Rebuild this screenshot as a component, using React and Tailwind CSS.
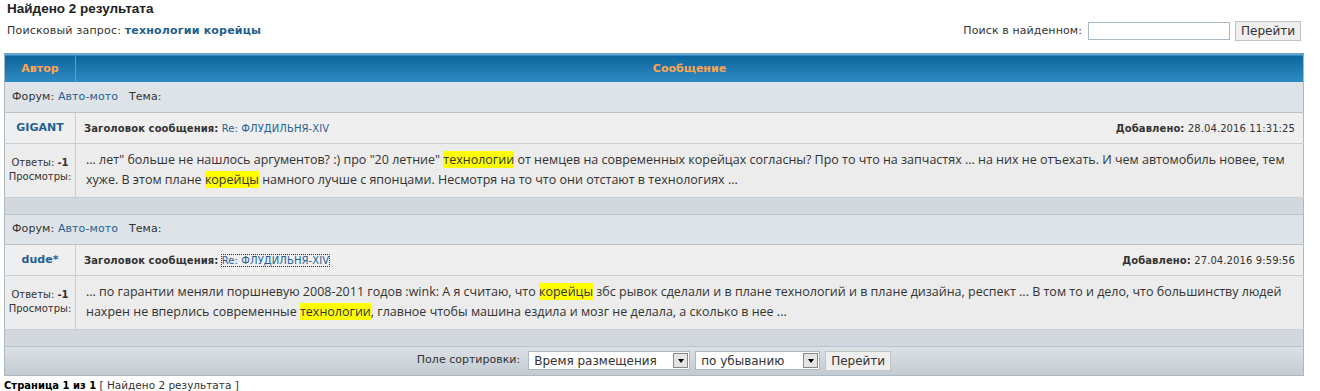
import React from "react";

const verdana = { fontFamily: '"DejaVu Sans", Verdana, sans-serif' };

function Hl({ children }) {
  return <span className="bg-[#ffff00]">{children}</span>;
}

function Select({ label, width }) {
  return (
    <div className={`flex items-center justify-between h-[19px] bg-white border border-[#a9b8c2] pl-[5px] pr-[1px] ${width}`}>
      <span className="text-[12px] text-[#333]">{label}</span>
      <span className="flex items-center justify-center w-[15px] h-[15px] bg-[#e4e4e4] border border-[#888]">
        <span className="w-0 h-0 border-l-[3px] border-r-[3px] border-t-[4px] border-l-transparent border-r-transparent border-t-black"></span>
      </span>
    </div>
  );
}

function Button({ children }) {
  return (
    <button className="h-[20px] px-[5px] bg-[#efefef] border border-[#c3c3c3] text-[12px] text-[#333] leading-none">
      {children}
    </button>
  );
}

function Result({ author, date, focused, children }) {
  return (
    <>
      <tr className="bg-[#dee3e7] h-[30px]">
        <td colSpan={2} className="px-[7px] text-[11px] tracking-[0.1px] text-[#333] border-b border-[#b8c3cb]">
          Форум: <a className="text-[#1f6194]">Авто-мото</a>&nbsp;&nbsp; Тема:
        </td>
      </tr>
      <tr className="bg-[#efefef] h-[31px]">
        <td className="pt-[2px] text-center text-[11px] font-bold text-[#1f6194] border-r border-b border-[#c8cfd4]">{author}</td>
        <td className="px-[8px] pt-[1px] text-[10px] tracking-[0.1px] text-[#333] border-b border-[#c8cfd4]">
          <div className="flex justify-between">
            <span>
              <b>Заголовок сообщения:</b>{" "}
              <a className={`text-[#1f6194] ${focused ? "outline-1 outline-dotted outline-[#333]" : ""}`}>Re: ФЛУДИЛЬНЯ-XIV</a>
            </span>
            <span>
              <b>Добавлено:</b> {date}
            </span>
          </div>
        </td>
      </tr>
      <tr className="bg-[#ececec] h-[54px]">
        <td className="text-center text-[10px] leading-[14px] text-[#333] border-r border-b border-[#c8cfd4]">
          Ответы: <b>-1</b>
          <br />
          Просмотры:
        </td>
        <td
          className="px-[10px] text-[12.5px] leading-[20px] text-[#333] border-b border-[#c8cfd4]"
          style={{ fontFamily: '"Open Sans", "Noto Sans", sans-serif' }}
        >
          {children}
        </td>
      </tr>
      <tr className="h-[17px] bg-[#d2d8dd]">
        <td colSpan={2} className="border-b border-[#b8c3cb]"></td>
      </tr>
    </>
  );
}

export default function App() {
  return (
    <div className="w-[1320px] h-[391px] bg-white text-[#333] overflow-hidden" style={verdana}>
      <div className="pl-[7px] pt-[1px]">
        <h2 className="text-[13.5px] font-bold text-[#222] leading-[16px]" style={{ fontFamily: '"Liberation Sans", Arial, sans-serif' }}>
          Найдено 2 результата
        </h2>
      </div>
      <div className="flex items-center justify-between pl-[7px] pr-[19px] h-[22px] mt-[3px]">
        <p className="text-[11px] tracking-[0.2px]">
          Поисковый запрос: <b className="text-[#1f5f8b]">технологии корейцы</b>
        </p>
        <div className="flex items-center gap-[5px]">
          <span className="text-[11px] tracking-[0.1px] mr-[1px]">Поиск в найденном:</span>
          <input className="w-[142px] h-[18px] border border-[#a9b8c2] bg-white" />
          <Button>Перейти</Button>
        </div>
      </div>

      <table className="ml-[4px] mt-[11px] w-[1300px] border-collapse border border-[#a9b8c2]">
        <thead>
          <tr className="h-[28px] bg-gradient-to-b from-[#0b679d] to-[#2e8bc3] border-t-2 border-[#6aa5c9]">
            <th className="w-[71px] pt-[2px] text-[11px] font-bold text-[#ffa34f] border-r border-[#5e9ec8]">Автор</th>
            <th className="pt-[2px] text-[11px] font-bold text-[#ffa34f]">Сообщение</th>
          </tr>
        </thead>
        <tbody>
          <Result author="GIGANT" date="28.04.2016 11:31:25">
            ... лет" больше не нашлось аргументов? :) про "20 летние" <Hl>технологии</Hl> от немцев на современных корейцах
            согласны? Про то что на запчастях ... на них не отъехать. И чем автомобиль новее, тем хуже. В этом плане{" "}
            <Hl>корейцы</Hl> намного лучше с японцами. Несмотря на то что они отстают в технологиях ...
          </Result>
          <Result author="dude*" date="27.04.2016 9:59:56" focused>
            ... по гарантии меняли поршневую 2008-2011 годов :wink: А я считаю, что <Hl>корейцы</Hl> збс рывок сделали и в плане
            технологий и в плане дизайна, респект ... В том то и дело, что большинству людей нахрен не вперлись современные{" "}
            <Hl>технологии</Hl>, главное чтобы машина ездила и мозг не делала, а сколько в нее ...
          </Result>
          <tr className="h-[29px] bg-gradient-to-b from-[#dde2e6] to-[#c3cbd1]">
            <td colSpan={2}>
              <div className="flex items-center justify-center gap-[5px]">
                <span className="text-[11px] mr-[3px]">Поле сортировки:</span>
                <Select label="Время размещения" width="w-[162px]" />
                <Select label="по убыванию" width="w-[125px]" />
                <Button>Перейти</Button>
              </div>
            </td>
          </tr>
        </tbody>
      </table>

      <div className="pl-[4px] mt-[2px] text-[10px] leading-[14px]">
        <b className="text-[#000]">Страница 1 из 1</b> <span className="text-[10.5px]">[ Найдено 2 результата ]</span>
      </div>
    </div>
  );
}
